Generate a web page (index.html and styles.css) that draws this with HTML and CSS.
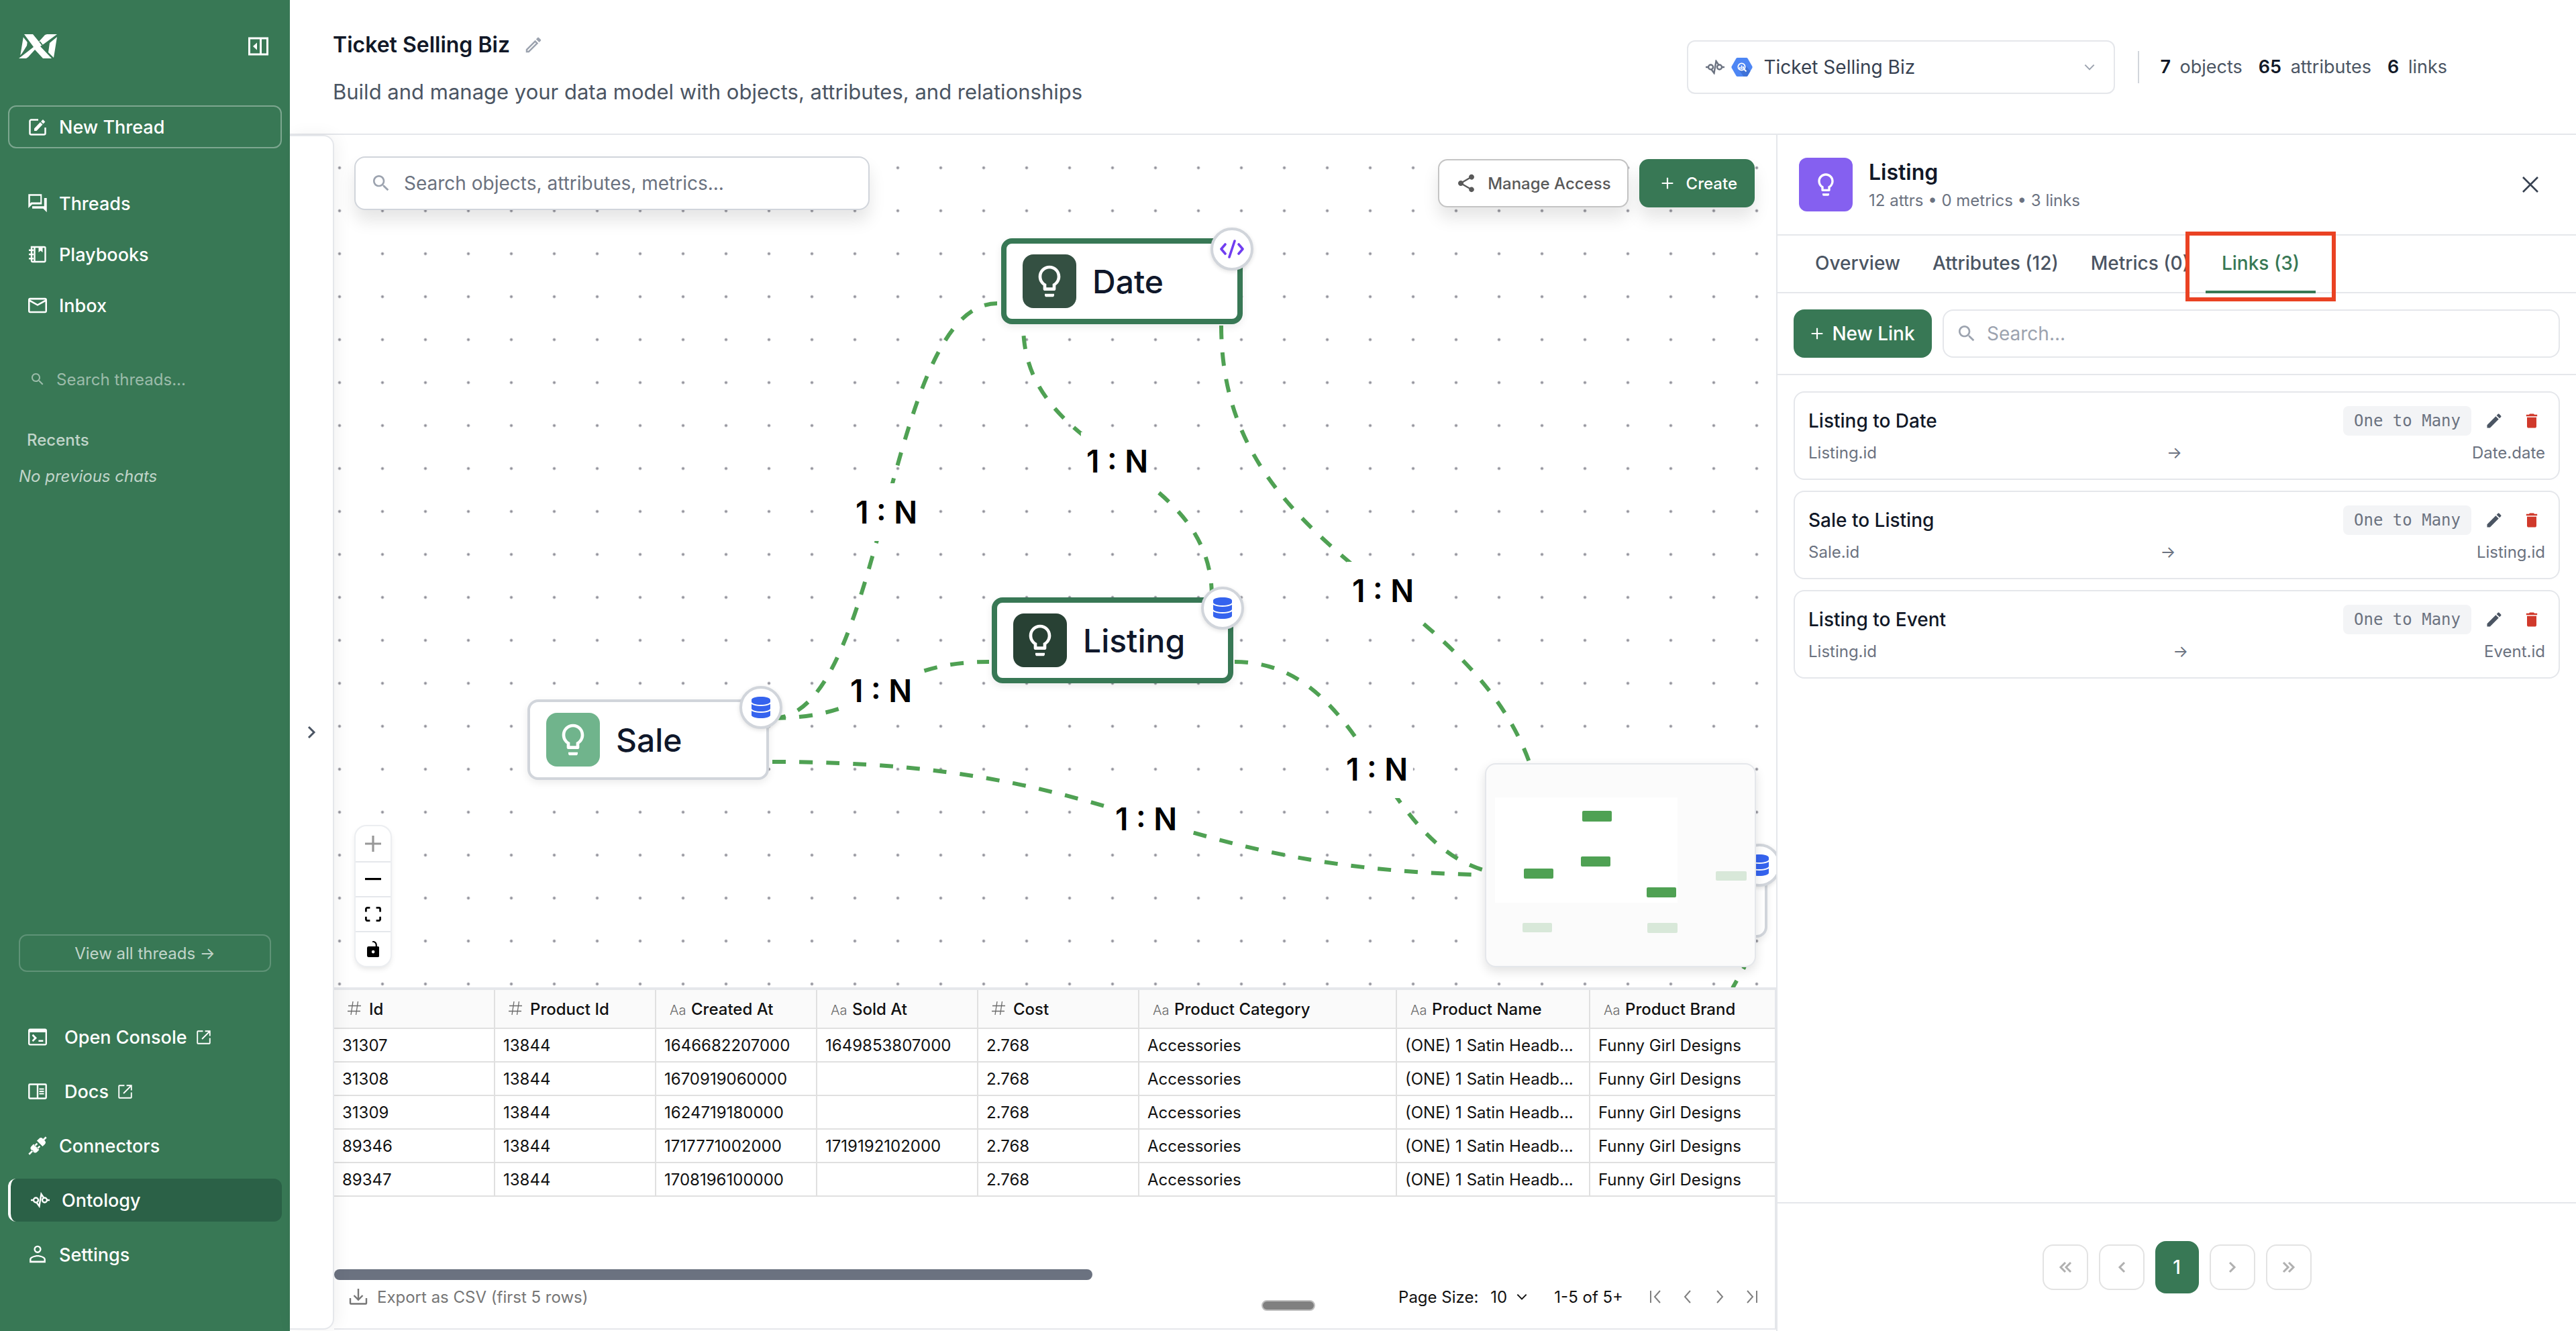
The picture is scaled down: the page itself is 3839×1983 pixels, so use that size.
FILE: index.html
```html
<!DOCTYPE html>
<html lang="en">
<head>
    <meta charset="UTF-8" />
    <meta name="viewport" content="width=device-width, initial-scale=1.0"/>
    <title>Ticket Selling Biz - Ontology</title>
    <link rel="stylesheet" href="styles.css">
</head>
<body>

<!-- shared icons -->
<svg class="icon-sprite" aria-hidden="true">
    <symbol id="i-search" viewBox="0 0 24 24"><path fill="currentColor" d="M15.5 14h-.79l-.28-.27C15.41 12.59 16 11.11 16 9.5 16 5.91 13.09 3 9.5 3S3 5.91 3 9.5 5.91 16 9.5 16c1.61 0 3.09-.59 4.23-1.57l.27.28v.79l5 4.99L20.49 19l-4.99-5zm-6 0C7.01 14 5 11.99 5 9.5S7.01 5 9.5 5 14 7.01 14 9.5 11.99 14 9.5 14z"/></symbol>
    <symbol id="i-edit" viewBox="0 0 24 24"><path fill="currentColor" d="M3 17.25V21h3.75L17.81 9.94l-3.75-3.75L3 17.25zM20.71 7.04c.39-.39.39-1.02 0-1.41l-2.34-2.34c-.39-.39-1.02-.39-1.41 0l-1.83 1.83 3.75 3.75 1.83-1.83z"/></symbol>
    <symbol id="i-trash" viewBox="0 0 24 24"><path fill="currentColor" d="M6 19c0 1.1.9 2 2 2h8c1.1 0 2-.9 2-2V7.600H6V19zM19 4h-3.500l-1-1h-5l-1 1H5v2.200h14V4z"/></symbol>
    <symbol id="i-bulb" viewBox="0 0 24 24"><path fill="currentColor" d="M9 21c0 .5.4 1 1 1h4c.6 0 1-.5 1-1v-1H9v1zm3-19C8.1 2 5 5.1 5 9c0 2.400 1.200 4.500 3 5.700V17c0 .5.4 1 1 1h6c.6 0 1-.5 1-1v-2.300c1.800-1.300 3-3.400 3-5.700 0-3.900-3.100-7-7-7zm2 11.700V16h-4v-2.300C8.200 12.900 7 11.100 7 9c0-2.800 2.200-5 5-5s5 2.200 5 5c0 2.100-1.200 3.900-3 4.700z"/></symbol>
    <symbol id="i-db" viewBox="0 0 448 512"><path fill="currentColor" d="M448 73.143v45.714C448 159.143 347.667 192 224 192S0 159.143 0 118.857V73.143C0 32.857 100.333 0 224 0s224 32.857 224 73.143zM448 176v102.857C448 319.143 347.667 352 224 352S0 319.143 0 278.857V176c48.125 33.143 136.208 48.572 224 48.572S399.874 209.143 448 176zm0 160v102.857C448 479.143 347.667 512 224 512S0 479.143 0 438.857V336c48.125 33.143 136.208 48.572 224 48.572S399.874 369.143 448 336z"/></symbol>
    <symbol id="i-external" viewBox="0 0 24 24"><path fill="currentColor" d="M20 20H4V4h7V2.200H4A1.800 1.800 0 0 0 2.200 4v16A1.800 1.800 0 0 0 4 21.800h16a1.800 1.800 0 0 0 1.800-1.800v-7H20v7zM14 2.200V4h4.700L9 13.700l1.300 1.300L20 5.300V10h1.800V2.200H14z"/></symbol>
    <symbol id="i-ontology" viewBox="0 0 28 22"><g fill="none" stroke="currentColor" stroke-width="2.4"><circle cx="7.5" cy="11" r="3.5"/><circle cx="20.5" cy="11" r="3.5"/><path d="M0 11h4M24 11h4M8.5 14.5l4 5.500 3-18 4 6"/></g></symbol>
    <symbol id="i-chevron-down" viewBox="0 0 24 24"><path fill="none" stroke="currentColor" stroke-width="2.4" d="M4 8l8 8 8-8"/></symbol>
    <symbol id="i-plus" viewBox="0 0 24 24"><path fill="none" stroke="currentColor" stroke-width="2.6" d="M12 2v20M2 12h20"/></symbol>
    <symbol id="i-hash" viewBox="0 0 20 20"><path fill="none" stroke="currentColor" stroke-width="1.3" d="M1 6.500h19M0 14.500h19M8 0L5 20M15.500 0l-3 20"/></symbol>
</svg>

<div class="app">
    <aside class="sidebar">
        <div class="sidebar-top">
            <svg class="logo" viewBox="0 0 58 36" role="img" aria-label="Logo">
                <g fill="#fff">
                    <path d="M8 0h13l9 11L39 1l3-1h15L38 14l-6 4 17 18H36L24 23 14 34l-3 2H0l13-10 9-7z"/>
                    <path d="M7 3l6 7-1 7L2 33zM57 4l-5 31-8-8 2-14z"/>
                </g>
                <path fill="none" stroke="#387855" stroke-width="2" d="M31 11l4 5M6 2l12 15L2 33"/>
            </svg>
            <button class="icon-button" aria-label="Collapse sidebar">
                <svg class="collapse-icon" viewBox="0 0 30 27">
                    <path fill="none" stroke="#fff" stroke-width="3" d="M1.500 1.500h27v24h-27zM18.500 1.500v24"/>
                    <path fill="#fff" d="M13 8v11l-6-5.500z"/>
                </svg>
            </button>
        </div>

        <a href="#" class="new-thread">
            <svg class="nav-icon" viewBox="0 0 28 28"><path fill="none" stroke="currentColor" stroke-width="2.5" d="M15 3.500H4.500a2 2 0 0 0-2 2v18a2 2 0 0 0 2 2h19a2 2 0 0 0 2-2V15"/><path fill="currentColor" d="M9 16.500V20h3.500l9-9.500L18 7zM19 6l3.500 3.500 2.800-3L22 3z"/></svg>
            New Thread
        </a>

        <nav class="nav-main">
            <a href="#" class="nav-item">
                <svg class="nav-icon" viewBox="2 2 20 20"><path fill="currentColor" d="M15 4v7H5.170L4 12.170V4h11m1.500-1.800H2.200V17l4-4h10.300zm5.300 4H19V15H6.300v2.500H18l3.800 4z"/></svg>
                Threads
            </a>
            <a href="#" class="nav-item">
                <svg class="nav-icon" viewBox="0 0 28 28"><path fill="none" stroke="currentColor" stroke-width="2.4" d="M5 3h19a1.500 1.500 0 0 1 1.500 1.500v19A1.500 1.500 0 0 1 24 25H6.500A1.500 1.500 0 0 1 5 23.500zM9.500 3v22"/><path fill="currentColor" d="M15.500 3h6v8l-3-2.500-3 2.500zM1 6.500h7v2.600H1zM1 12.700h7v2.600H1zM1 18.900h7v2.600H1z"/></svg>
                Playbooks
            </a>
            <a href="#" class="nav-item">
                <svg class="nav-icon" viewBox="2 2 20 20"><path fill="currentColor" d="M22 6c0-1.100-.9-2-2-2H4c-1.100 0-2 .9-2 2v12c0 1.100.9 2 2 2h16c1.100 0 2-.9 2-2V6zm-1.800 0L12 10.500 3.800 6zm0 12.200H3.800V8L12 12.500 20.200 8v10.200z"/></svg>
                Inbox
            </a>
        </nav>

        <label class="thread-search">
            <svg class="thread-search-icon"><use href="#i-search"/></svg>
            <input type="text" placeholder="Search threads..." aria-label="Search threads">
        </label>
        <h2 class="recents-title">Recents</h2>
        <p class="recents-empty">No previous chats</p>

        <div class="sidebar-bottom">
            <button class="view-all">View all threads →</button>
            <nav class="nav-bottom">
                <a href="#" class="nav-item nav-wide">
                    <svg class="nav-icon" viewBox="2 2 20 20"><path fill="currentColor" d="M20 3H4c-1.110 0-2 .9-2 2v14c0 1.100.89 2 2 2h16c1.100 0 2-.9 2-2V5c0-1.100-.9-2-2-2zm.3 16.300H3.700V7h16.600v12.300zM18 17h-5v-1.800h5V17zM7.300 17L6 15.700 8.400 13 6 10.400 7.300 9l4 4-4 4z"/></svg>
                    <span>Open Console</span>
                    <svg class="external-icon"><use href="#i-external"/></svg>
                </a>
                <a href="#" class="nav-item nav-wide">
                    <svg class="nav-icon" viewBox="0 0 28 28"><path fill="none" stroke="currentColor" stroke-width="2.4" d="M2.500 3.500h23a1.200 1.200 0 0 1 1.200 1.200v18.600a1.200 1.200 0 0 1-1.200 1.200h-23a1.200 1.200 0 0 1-1.200-1.200V4.700a1.200 1.200 0 0 1 1.200-1.200zM14 3.500v21"/><path stroke="currentColor" stroke-width="1.8" d="M16.500 10.500h7M16.500 14h7M16.500 17.500h7"/></svg>
                    <span>Docs</span>
                    <svg class="external-icon"><use href="#i-external"/></svg>
                </a>
                <a href="#" class="nav-item">
                    <svg class="nav-icon" viewBox="0 0 28 28"><g transform="rotate(45 14 14)" fill="currentColor"><path d="M8 9.500V5a4 4 0 0 1 4-4h4a4 4 0 0 1 4 4v4.500zM8 16.500V21a4 4 0 0 0 4 4h4a4 4 0 0 0 4-4v-4.500zM10 12h2.500v5H10zM15.500 12H18v5h-2.500zM12.700-4h2.600v6h-2.600zM12.700 24h2.600v8h-2.600z"/></g></svg>
                    Connectors
                </a>
                <a href="#" class="nav-item active">
                    <svg class="nav-icon"><use href="#i-ontology"/></svg>
                    Ontology
                </a>
                <a href="#" class="nav-item">
                    <svg class="nav-icon" viewBox="2 2 20 20"><path fill="currentColor" d="M12 4.200c1.300 0 2.300 1 2.300 2.300S13.300 8.800 12 8.800 9.700 7.800 9.700 6.500s1-2.300 2.300-2.300m0 10.200c3.300 0 6.800 1.600 6.800 2.800v1.600H5.200v-1.600c0-1.200 3.500-2.800 6.800-2.800M12 2.500a4 4 0 1 0 0 8 4 4 0 0 0 0-8zm0 10.200c-3 0-8.500 1.600-8.500 4.500v3.500h17v-3.500c0-2.900-5.500-4.500-8.500-4.500z"/></svg>
                    Settings
                </a>
            </nav>
        </div>
    </aside>

    <main class="main">
        <header class="page-header">
            <div class="page-heading">
                <div class="title-row">
                    <h1>Ticket Selling Biz</h1>
                    <button class="icon-button" aria-label="Rename">
                        <svg class="rename-icon" viewBox="0 0 24 24"><path fill="currentColor" d="M14.060 9.020l.92.92L5.920 19H5v-.92l9.060-9.060M17.660 3c-.25 0-.51.1-.7.29l-1.830 1.830 3.750 3.750 1.830-1.830c.39-.39.39-1.020 0-1.410l-2.340-2.340c-.2-.2-.45-.29-.71-.29zm-3.600 3.190L3 17.250V21h3.750L17.810 9.940l-3.750-3.750z"/></svg>
                    </button>
                </div>
                <p class="page-subtitle">Build and manage your data model with objects, attributes, and relationships</p>
            </div>
            <div class="header-right">
                <label class="model-select">
                    <svg class="model-icon"><use href="#i-ontology"/></svg>
                    <svg class="bigquery-icon" viewBox="0 0 32 28">
                        <path fill="#4d86f4" d="M9.500 0h13q1.500 0 2.200 1.200l6.600 11.500q.7 1.300 0 2.600l-6.600 11.500q-.7 1.200-2.200 1.200h-13q-1.500 0-2.200-1.200L.7 15.300q-.7-1.300 0-2.600L7.300 1.200Q8 0 9.500 0z"/>
                        <path fill="#3f72d8" d="M20 10l8.500 10-4 7q-.6 1-2 1h-4L12 19z"/>
                        <circle cx="15.5" cy="13.5" r="5.2" fill="#4d86f4" stroke="#fff" stroke-width="1.8"/>
                        <path stroke="#fff" stroke-width="1.8" d="M13 14v2.500M15.500 11.500V17M18 13v3.500M19.500 17.500l3 3"/>
                    </svg>
                    <select aria-label="Data model"><option>Ticket Selling Biz</option></select>
                    <svg class="select-arrow"><use href="#i-chevron-down"/></svg>
                </label>
                <div class="stats">
                    <span><b>7</b> objects</span>
                    <span><b>65</b> attributes</span>
                    <span><b>6</b> links</span>
                </div>
            </div>
        </header>

        <div class="workspace">
            <div class="drawer">
                <button class="icon-button" aria-label="Expand panel">
                    <svg class="drawer-icon" viewBox="0 0 24 24"><path fill="none" stroke="currentColor" stroke-width="3" d="M8 4l8 8-8 8"/></svg>
                </button>
            </div>

            <div class="center">
                <div class="canvas">
                    <svg class="edges">
                        <path d="M653 869C821 869 821 251 988 251"/>
                        <path d="M653 869C815 869 815 785 976 785"/>
                        <path d="M653 934C1210 934 1210 1103 1767 1103"/>
                        <path d="M1342 785C1554 785 1554 1103 1767 1103"/>
                        <path d="M1308 688C1308 486 1027 486 1027 284"/>
                        <path d="M1322 284C1322 678 1804 678 1804 1071"/>
                        <path class="edge-tail" d="M2102 1239L2084 1271"/>
                    </svg>

                    <span class="edge-label label-sale-date">1 : N</span>
                    <span class="edge-label label-sale-listing">1 : N</span>
                    <span class="edge-label label-sale-event">1 : N</span>
                    <span class="edge-label label-listing-event">1 : N</span>
                    <span class="edge-label label-listing-date">1 : N</span>
                    <span class="edge-label label-date-event">1 : N</span>

                    <div class="node selected node-date">
                        <span class="node-icon"><svg><use href="#i-bulb"/></svg></span>
                        Date
                        <span class="node-badge badge-code">
                            <svg viewBox="0 0 36 28"><path fill="none" stroke="currentColor" stroke-width="3.6" stroke-linecap="round" stroke-linejoin="round" d="M8 7l-6 7 6 7M28 7l6 7-6 7M22 2l-8 24"/></svg>
                        </span>
                    </div>
                    <div class="node selected node-listing">
                        <span class="node-icon"><svg><use href="#i-bulb"/></svg></span>
                        Listing
                        <span class="node-badge"><svg><use href="#i-db"/></svg></span>
                    </div>
                    <div class="node node-sale">
                        <span class="node-icon"><svg><use href="#i-bulb"/></svg></span>
                        Sale
                        <span class="node-badge"><svg><use href="#i-db"/></svg></span>
                    </div>
                    <div class="node node-event">
                        <span class="node-icon"><svg><use href="#i-bulb"/></svg></span>
                        <span class="node-badge"><svg><use href="#i-db"/></svg></span>
                    </div>

                    <div class="canvas-toolbar">
                        <label class="canvas-search">
                            <svg><use href="#i-search"/></svg>
                            <input type="text" placeholder="Search objects, attributes, metrics..." aria-label="Search objects, attributes, metrics">
                        </label>
                        <div class="canvas-actions">
                            <button class="btn-access">
                                <svg viewBox="0 0 24 24"><path fill="currentColor" d="M18 16.080c-.76 0-1.440.3-1.960.77L8.910 12.700c.05-.23.09-.46.09-.7s-.04-.47-.09-.7l7.050-4.110c.54.5 1.250.81 2.040.81 1.660 0 3-1.340 3-3s-1.340-3-3-3-3 1.340-3 3c0 .24.04.47.09.7L8.040 9.810C7.500 9.310 6.790 9 6 9c-1.660 0-3 1.340-3 3s1.340 3 3 3c.79 0 1.500-.31 2.040-.81l7.120 4.160c-.05.21-.08.43-.08.65 0 1.610 1.310 2.920 2.920 2.920 1.610 0 2.920-1.310 2.920-2.920s-1.310-2.920-2.920-2.920z"/></svg>
                                Manage Access
                            </button>
                            <button class="btn-create">
                                <svg><use href="#i-plus"/></svg>
                                Create
                            </button>
                        </div>
                    </div>

                    <div class="zoom-controls">
                        <button aria-label="Zoom in" disabled><svg viewBox="0 0 32 32"><path d="M32 18.133H18.133V32h-4.266V18.133H0v-4.266h13.867V0h4.266v13.867H32z"/></svg></button>
                        <button aria-label="Zoom out"><svg viewBox="0 0 32 5"><path d="M0 0h32v4.200H0z"/></svg></button>
                        <button aria-label="Fit view"><svg viewBox="0 0 32 30"><path d="M3.692 4.630c0-.53.4-.938.939-.938h5.215V0H4.708C2.130 0 0 2.054 0 4.630v5.216h3.692V4.631zM27.354 0h-5.200v3.692h5.170c.53 0 .984.4.984.939v5.215H32V4.631A4.624 4.624 0 0027.354 0zm.954 24.830c0 .532-.4.94-.939.94h-5.215v3.768h5.215c2.577 0 4.631-2.130 4.631-4.707v-5.139h-3.692v5.139zm-23.677.94c-.531 0-.939-.4-.939-.94v-5.138H0v5.139c0 2.577 2.130 4.707 4.708 4.707h5.138V25.770H4.631z"/></svg></button>
                        <button aria-label="Toggle lock"><svg viewBox="0 0 25 32"><path d="M21.333 10.667H19.810V7.619C19.810 3.429 16.380 0 12.190 0c-4.114 1.828-1.370 2.133.305 2.438 1.676.305 4.420 2.590 4.420 5.181v3.048H3.047A3.056 3.056 0 000 13.714v15.238A3.056 3.056 0 003.048 32h18.285a3.056 3.056 0 003.048-3.048V13.714a3.056 3.056 0 00-3.048-3.047zM12.190 24.533a3.056 3.056 0 01-3.047-3.047 3.056 3.056 0 013.047-3.048 3.056 3.056 0 013.048 3.048 3.056 3.056 0 01-3.048 3.047z"/></svg></button>
                    </div>

                    <svg class="minimap" viewBox="0 0 400 300" role="img" aria-label="Minimap">
                        <rect x="13" y="49" width="272" height="157" fill="#fff"/>
                        <g fill="#4fa153">
                            <rect x="143" y="69" width="44" height="16" rx="2"/>
                            <rect x="141" y="137" width="44" height="15" rx="2"/>
                            <rect x="56" y="155" width="44" height="15" rx="2"/>
                            <rect x="239" y="183" width="44" height="15" rx="2"/>
                        </g>
                        <g fill="#d8e8d9">
                            <rect x="342" y="159" width="46" height="14" rx="2"/>
                            <rect x="54" y="236" width="44" height="14" rx="2"/>
                            <rect x="240" y="236" width="45" height="15" rx="2"/>
                        </g>
                    </svg>
                </div>

                <section class="data-panel">
                    <table class="data-table">
                        <colgroup>
                            <col class="col-s"><col class="col-s"><col class="col-s"><col class="col-s"><col class="col-s">
                            <col class="col-l"><col class="col-m"><col>
                        </colgroup>
                        <thead>
                            <tr>
                                <th><svg class="hash"><use href="#i-hash"/></svg>Id</th>
                                <th><svg class="hash"><use href="#i-hash"/></svg>Product Id</th>
                                <th><i>Aa</i>Created At</th>
                                <th><i>Aa</i>Sold At</th>
                                <th><svg class="hash"><use href="#i-hash"/></svg>Cost</th>
                                <th><i>Aa</i>Product Category</th>
                                <th><i>Aa</i>Product Name</th>
                                <th><i>Aa</i>Product Brand</th>
                            </tr>
                        </thead>
                        <tbody>
                            <tr><td>31307</td><td>13844</td><td>1646682207000</td><td>1649853807000</td><td>2.768</td><td>Accessories</td><td>(ONE) 1 Satin Headb...</td><td>Funny Girl Designs</td></tr>
                            <tr><td>31308</td><td>13844</td><td>1670919060000</td><td></td><td>2.768</td><td>Accessories</td><td>(ONE) 1 Satin Headb...</td><td>Funny Girl Designs</td></tr>
                            <tr><td>31309</td><td>13844</td><td>1624719180000</td><td></td><td>2.768</td><td>Accessories</td><td>(ONE) 1 Satin Headb...</td><td>Funny Girl Designs</td></tr>
                            <tr><td>89346</td><td>13844</td><td>1717771002000</td><td>1719192102000</td><td>2.768</td><td>Accessories</td><td>(ONE) 1 Satin Headb...</td><td>Funny Girl Designs</td></tr>
                            <tr><td>89347</td><td>13844</td><td>1708196100000</td><td></td><td>2.768</td><td>Accessories</td><td>(ONE) 1 Satin Headb...</td><td>Funny Girl Designs</td></tr>
                        </tbody>
                    </table>
                    <div class="h-scroll"></div>
                    <div class="table-footer">
                        <button class="btn-export">
                            <svg viewBox="0 0 28 28"><path fill="none" stroke="currentColor" stroke-width="2.4" d="M14 2v16M7.500 12l6.500 6.500 6.500-6.500M2 16v7.500a1 1 0 0 0 1 1h22a1 1 0 0 0 1-1V16"/></svg>
                            Export as CSV (first 5 rows)
                        </button>
                        <div class="table-paging">
                            <label for="page-size">Page Size:</label>
                            <span class="page-size">
                                <select id="page-size"><option>10</option></select>
                                <svg><use href="#i-chevron-down"/></svg>
                            </span>
                            <span class="range">1-5 of 5+</span>
                            <button aria-label="First page"><svg viewBox="0 0 20 20"><path d="M3 1v18M17 1l-8 9 8 9"/></svg></button>
                            <button aria-label="Previous page"><svg viewBox="0 0 20 20"><path d="M14 1l-8 9 8 9"/></svg></button>
                            <button aria-label="Next page"><svg viewBox="0 0 20 20"><path d="M6 1l8 9-8 9"/></svg></button>
                            <button aria-label="Last page"><svg viewBox="0 0 20 20"><path d="M3 1l8 9-8 9M17 1v18"/></svg></button>
                        </div>
                    </div>
                    <span class="resize-handle"></span>
                </section>
            </div>

            <section class="details">
                <div class="details-header">
                    <span class="details-icon"><svg><use href="#i-bulb"/></svg></span>
                    <div class="details-heading">
                        <h2>Listing</h2>
                        <p>12 attrs • 0 metrics • 3 links</p>
                    </div>
                    <button class="icon-button" aria-label="Close">
                        <svg class="close-icon" viewBox="0 0 24 24"><path fill="none" stroke="currentColor" stroke-width="2.6" d="M1 1l22 22M23 1L1 23"/></svg>
                    </button>
                </div>
                <div class="tabs" role="tablist">
                    <button role="tab">Overview</button>
                    <button role="tab">Attributes (12)</button>
                    <button role="tab">Metrics (0)</button>
                    <button role="tab" class="active" aria-selected="true">Links (3)</button>
                </div>
                <div class="details-toolbar">
                    <button class="btn-new-link">
                        <svg><use href="#i-plus"/></svg>
                        New Link
                    </button>
                    <label class="link-search">
                        <svg><use href="#i-search"/></svg>
                        <input type="text" placeholder="Search..." aria-label="Search links">
                    </label>
                </div>
                <div class="link-list">
                    <article class="link-card">
                        <div class="link-row">
                            <h3>Listing to Date</h3>
                            <code>One to Many</code>
                            <button class="link-edit" aria-label="Edit"><svg><use href="#i-edit"/></svg></button>
                            <button class="link-delete" aria-label="Delete"><svg><use href="#i-trash"/></svg></button>
                        </div>
                        <div class="link-path"><span>Listing.id</span><span>→</span><span>Date.date</span></div>
                    </article>
                    <article class="link-card">
                        <div class="link-row">
                            <h3>Sale to Listing</h3>
                            <code>One to Many</code>
                            <button class="link-edit" aria-label="Edit"><svg><use href="#i-edit"/></svg></button>
                            <button class="link-delete" aria-label="Delete"><svg><use href="#i-trash"/></svg></button>
                        </div>
                        <div class="link-path"><span>Sale.id</span><span>→</span><span>Listing.id</span></div>
                    </article>
                    <article class="link-card">
                        <div class="link-row">
                            <h3>Listing to Event</h3>
                            <code>One to Many</code>
                            <button class="link-edit" aria-label="Edit"><svg><use href="#i-edit"/></svg></button>
                            <button class="link-delete" aria-label="Delete"><svg><use href="#i-trash"/></svg></button>
                        </div>
                        <div class="link-path"><span>Listing.id</span><span>→</span><span>Event.id</span></div>
                    </article>
                </div>
                <div class="pager">
                    <button aria-label="First page"><svg viewBox="0 0 20 20"><path d="M10 3l-7 7 7 7M18 3l-7 7 7 7"/></svg></button>
                    <button aria-label="Previous page"><svg viewBox="0 0 20 20"><path d="M14 3l-7 7 7 7"/></svg></button>
                    <button class="current">1</button>
                    <button aria-label="Next page"><svg viewBox="0 0 20 20"><path d="M6 3l7 7-7 7"/></svg></button>
                    <button aria-label="Last page"><svg viewBox="0 0 20 20"><path d="M2 3l7 7-7 7M10 3l7 7-7 7"/></svg></button>
                </div>
            </section>
        </div>
    </main>
</div>

</body>
</html>
```
FILE: styles.css
```css
* {
    box-sizing: border-box;
}

body {
    margin: 0;
    font-family: Inter, "Liberation Sans", sans-serif;
    font-size: 28px;
    color: #111827;
    background: #fff;
}

h1, h2, h3, p {
    margin: 0;
}

button, input, select {
    font: inherit;
    color: inherit;
    border: none;
    background: none;
    padding: 0;
    outline: none;
}

select {
    appearance: none;
}

svg {
    display: block;
    flex: none;
}

a {
    color: inherit;
    text-decoration: none;
}

.icon-sprite {
    position: absolute;
    width: 0;
    height: 0;
}

.icon-button {
    display: flex;
    align-items: center;
    justify-content: center;
}

.app {
    display: flex;
    height: 100vh;
    overflow: hidden;
}

/* sidebar */

.sidebar {
    display: flex;
    flex-direction: column;
    flex: none;
    width: 432px;
    padding: 46px 12px 82px;
    background: #387855;
    color: #fff;
    font-size: 27px;
    font-weight: 500;
}

.sidebar-top {
    display: flex;
    align-items: center;
    justify-content: space-between;
    padding: 0 20px 0 16px;
    height: 46px;
    margin-bottom: 65px;
}

.logo {
    width: 58px;
    height: 42px;
}

.collapse-icon {
    width: 30px;
    height: 30px;
}

.new-thread {
    display: flex;
    align-items: center;
    gap: 18px;
    height: 64px;
    padding: 0 28px;
    border: 2px solid rgba(255, 255, 255, 0.35);
    border-radius: 12px;
}

.nav-icon {
    width: 28px;
    height: 28px;
}

.nav-main {
    display: flex;
    flex-direction: column;
    gap: 12px;
    margin-top: 50px;
}

.nav-item {
    display: flex;
    align-items: center;
    gap: 18px;
    height: 64px;
    padding: 0 30px;
}

.nav-wide {
    gap: 12px;
}

.nav-wide span {
    padding-left: 14px;
}

.external-icon {
    width: 25px;
    height: 25px;
}

.nav-item.active {
    background: #2b6147;
    border-left: 4px solid #fff;
    border-radius: 12px;
}

.thread-search {
    display: flex;
    align-items: center;
    gap: 16px;
    height: 48px;
    margin-top: 54px;
    padding: 0 32px;
    color: rgba(255, 255, 255, 0.5);
}

.thread-search-icon {
    width: 24px;
    height: 24px;
}

.thread-search input {
    flex: 1;
    min-width: 0;
    font-size: 24px;
    font-weight: 400;
}

.thread-search input::placeholder {
    color: rgba(255, 255, 255, 0.5);
}

.recents-title {
    margin: 51px 0 0 28px;
    font-size: 24px;
    line-height: 32px;
    font-weight: 500;
    color: rgba(255, 255, 255, 0.7);
}

.recents-empty {
    margin: 22px 0 0 16px;
    font-size: 24px;
    line-height: 32px;
    font-weight: 400;
    font-style: italic;
    color: rgba(255, 255, 255, 0.7);
}

.sidebar-bottom {
    margin-top: auto;
}

.view-all {
    display: block;
    width: calc(100% - 32px);
    height: 56px;
    margin: 0 16px 65px;
    border: 2px solid rgba(255, 255, 255, 0.2);
    border-radius: 12px;
    font-size: 24px;
    font-weight: 400;
    color: rgba(255, 255, 255, 0.7);
}

.nav-bottom {
    display: flex;
    flex-direction: column;
    gap: 17px;
}

/* header */

.main {
    display: flex;
    flex-direction: column;
    flex: 1;
    min-width: 0;
}

.page-header {
    display: flex;
    align-items: center;
    justify-content: space-between;
    flex: none;
    height: 201px;
    padding: 0 192px 0 64px;
    border-bottom: 2px solid #e5e7eb;
}

.page-heading {
    display: flex;
    flex-direction: column;
    gap: 24px;
    padding-top: 2px;
}

.title-row {
    display: flex;
    align-items: center;
    gap: 20px;
}

.page-header h1 {
    font-size: 32px;
    line-height: 48px;
    font-weight: 600;
    color: #111827;
}

.rename-icon {
    width: 30px;
    height: 30px;
    color: #9ca3af;
}

.page-subtitle {
    font-size: 31px;
    line-height: 44px;
    color: #4b5563;
}

.header-right {
    display: flex;
    align-items: center;
    gap: 34px;
}

.model-select {
    display: flex;
    align-items: center;
    gap: 10px;
    width: 638px;
    height: 80px;
    padding: 0 26px;
    border: 2px solid #e5e7eb;
    border-radius: 12px;
    color: #374151;
}

.model-select select {
    flex: 1;
    padding-left: 6px;
}

.model-icon {
    width: 28px;
    height: 22px;
    color: #6b7280;
}

.bigquery-icon {
    width: 32px;
    height: 28px;
}

.select-arrow {
    width: 20px;
    height: 20px;
    color: #9ca3af;
}

.stats {
    display: flex;
    align-items: center;
    gap: 24px;
    height: 48px;
    padding-left: 31px;
    border-left: 2px solid #d1d5db;
    font-size: 27px;
    color: #4b5563;
}

.stats b {
    margin-right: 6px;
    font-weight: 600;
    color: #111827;
}

/* workspace */

.workspace {
    display: flex;
    flex: 1;
    min-height: 0;
    padding-bottom: 2px;
}

.drawer {
    display: flex;
    align-items: center;
    justify-content: center;
    flex: none;
    position: relative;
    z-index: 2;
    width: 66px;
    border: 2px solid #e5e7eb;
    border-left: none;
    border-radius: 0 16px 16px 0;
    background: #fff;
    box-shadow: 4px 0 24px rgba(0, 0, 0, 0.06);
}

.drawer-icon {
    width: 24px;
    height: 24px;
    color: #4b5563;
}

.center {
    display: flex;
    flex-direction: column;
    flex: 1;
    min-width: 0;
}

.canvas {
    position: relative;
    flex: 1;
    min-height: 0;
    overflow: hidden;
    background-image: radial-gradient(circle at center, #91919a 1px, transparent 3px);
    background-size: 64px 64px;
    background-position: -24px 17px;
}

.edges {
    position: absolute;
    inset: 0;
    width: 100%;
    height: 100%;
    fill: none;
    stroke: #4fa153;
    stroke-width: 6px;
    stroke-dasharray: 20 20;
}

.edge-tail {
    stroke-dashoffset: 16px;
}

.edge-label {
    position: absolute;
    transform: translate(-50%, -50%);
    padding: 16px 8px;
    background: #fff;
    font-size: 46px;
    line-height: 54px;
    font-weight: 600;
    white-space: nowrap;
    color: #000;
}

.label-sale-date { left: 823px; top: 562px; }
.label-sale-listing { left: 815px; top: 828px; }
.label-sale-event { left: 1210px; top: 1019px; }
.label-listing-event { left: 1554px; top: 945px; }
.label-listing-date { left: 1167px; top: 486px; }
.label-date-event { left: 1563px; top: 679px; }

.node {
    position: absolute;
    display: flex;
    align-items: center;
    gap: 24px;
    width: 360px;
    padding: 16px 24px;
    border: 4px solid #d1d5db;
    border-radius: 16px;
    background: #fff;
    box-shadow: 0 4px 12px rgba(0, 0, 0, 0.08);
    font-size: 48px;
    font-weight: 500;
    color: #0f172a;
}

.node.selected {
    border: 8px solid #387855;
}

.node-date { left: 994px; top: 154px; }
.node-listing { left: 980px; top: 689px; }
.node-sale { left: 288px; top: 841px; }
.node-event { left: 1776px; top: 1076px; }

.node-icon {
    display: flex;
    align-items: center;
    justify-content: center;
    width: 80px;
    height: 80px;
    border-radius: 16px;
    background: #70b48c;
    color: #fff;
}

.node-date .node-icon {
    background: #345042;
}

.node-listing .node-icon {
    background: #284134;
}

.node-icon svg {
    width: 56px;
    height: 56px;
}

.node-badge {
    position: absolute;
    top: -24px;
    right: -24px;
    display: flex;
    align-items: center;
    justify-content: center;
    width: 64px;
    height: 64px;
    border: 4px solid #d1d5db;
    border-radius: 50%;
    background: #fff;
    box-shadow: 0 2px 6px rgba(0, 0, 0, 0.12);
    color: #3563ee;
}

.node-badge svg {
    width: 28px;
    height: 32px;
}

.badge-code {
    color: #703df0;
}

.badge-code svg {
    width: 36px;
    height: 28px;
}

.canvas-toolbar {
    position: absolute;
    top: 32px;
    left: 30px;
    right: 32px;
    display: flex;
    align-items: flex-start;
    justify-content: space-between;
}

.canvas-search {
    display: flex;
    align-items: center;
    gap: 18px;
    width: 768px;
    height: 80px;
    padding: 0 22px;
    border: 2px solid #d1d5db;
    border-radius: 16px;
    background: #fff;
    box-shadow: 0 16px 24px rgba(0, 0, 0, 0.1);
    color: #9ca3af;
}

.canvas-search svg {
    width: 32px;
    height: 32px;
}

.canvas-search input {
    flex: 1;
    font-size: 28px;
}

.canvas-search input::placeholder {
    color: #6b7280;
}

.canvas-actions {
    display: flex;
    gap: 16px;
    padding-top: 4px;
}

.canvas-actions button {
    display: flex;
    align-items: center;
    gap: 18px;
    height: 72px;
    border-radius: 14px;
    box-shadow: 0 16px 24px rgba(0, 0, 0, 0.1);
    font-size: 24px;
    font-weight: 500;
}

.canvas-actions .btn-access {
    padding: 0 24px;
    gap: 16px;
    border: 2px solid #c4c4c4;
    background: #fff;
    color: #595959;
}

.btn-access svg {
    width: 32px;
    height: 32px;
}

.canvas-actions .btn-create {
    padding: 0 26px 0 32px;
    background: #387855;
    color: #fff;
}

.btn-create svg {
    width: 20px;
    height: 20px;
}

.zoom-controls {
    position: absolute;
    left: 32px;
    bottom: 32px;
    display: flex;
    flex-direction: column;
    width: 52px;
    border-radius: 16px;
    background: #fff;
    box-shadow: 0 0 0 2px #eceef1, 0 4px 8px rgba(0, 0, 0, 0.12);
}

.zoom-controls button {
    display: flex;
    align-items: center;
    justify-content: center;
    height: 52px;
}

.zoom-controls button + button {
    border-top: 2px solid #e5e7eb;
}

.zoom-controls button:disabled {
    opacity: 0.4;
}

.zoom-controls svg {
    max-width: 24px;
    max-height: 24px;
}

.minimap {
    position: absolute;
    right: 30px;
    bottom: 30px;
    width: 404px;
    height: 304px;
    border: 2px solid #e5e7eb;
    border-radius: 16px;
    background: #fbfbfb;
    box-shadow: 0 6px 16px rgba(0, 0, 0, 0.12);
}

/* table */

.data-panel {
    display: flex;
    flex-direction: column;
    flex: none;
    position: relative;
    border-top: 4px solid #e5e7eb;
    border-right: 2px solid #e5e7eb;
    border-bottom: 2px solid #e5e7eb;
}

.data-table {
    width: 100%;
    table-layout: fixed;
    border-collapse: separate;
    border-spacing: 0;
    font-size: 24px;
    color: #111;
}

.col-s { width: 240px; }
.col-m { width: 288px; }
.col-l { width: 384px; }

.data-table th,
.data-table td {
    border-right: 2px solid #e0e0e0;
    border-bottom: 2px solid #e0e0e0;
    text-align: left;
    white-space: nowrap;
    overflow: hidden;
}

.data-table th:last-child,
.data-table td:last-child {
    border-right: none;
}

.data-table th {
    height: 58px;
    padding: 0 20px;
    background: #fafafa;
    font-weight: 500;
}

.data-table td {
    height: 50px;
    padding: 0 12px;
}

.data-table i {
    display: inline-block;
    width: 32px;
    font-size: 20px;
    font-style: normal;
    font-weight: 300;
    color: #6b6b6b;
}

.hash {
    display: inline-block;
    width: 20px;
    height: 20px;
    margin-right: 12px;
    color: #6b6b6b;
}

.h-scroll {
    width: 1130px;
    height: 16px;
    margin-top: 108px;
    border-radius: 8px;
    background: #6b7280;
}

.table-footer {
    display: flex;
    align-items: center;
    justify-content: space-between;
    height: 50px;
    margin-bottom: 22px;
    padding: 0 24px 0 22px;
    font-size: 24px;
}

.btn-export {
    display: flex;
    align-items: center;
    gap: 14px;
    color: #767676;
}

.btn-export svg {
    width: 28px;
    height: 28px;
}

.table-paging {
    display: flex;
    align-items: center;
    color: #111;
}

.page-size {
    display: flex;
    align-items: center;
    gap: 12px;
    margin: 0 38px 0 18px;
}

.page-size svg {
    width: 20px;
    height: 20px;
}

.range {
    margin-right: 24px;
}

.table-paging button {
    display: flex;
    align-items: center;
    justify-content: center;
    width: 48px;
    height: 48px;
}

.table-paging button:last-child {
    margin-right: -14px;
}

.table-paging button svg,
.pager svg {
    width: 20px;
    height: 20px;
    fill: none;
    stroke: #808080;
    stroke-width: 2px;
}

.resize-handle {
    position: absolute;
    left: 1382px;
    bottom: 26px;
    width: 80px;
    height: 16px;
    border: 2px solid #bfbfbf;
    border-radius: 8px;
    background: #808080;
}

/* details panel */

.details {
    display: flex;
    flex-direction: column;
    flex: none;
    width: 1192px;
    margin-bottom: -2px;
    border-left: 2px solid #e5e7eb;
}

.details-header {
    display: flex;
    align-items: center;
    gap: 24px;
    height: 150px;
    padding: 0 56px 0 32px;
    border-bottom: 2px solid #e5e7eb;
}

.details-icon {
    display: flex;
    align-items: center;
    justify-content: center;
    width: 80px;
    height: 80px;
    border-radius: 12px;
    background: #8560f0;
    color: #fff;
}

.details-icon svg {
    width: 40px;
    height: 40px;
}

.details-heading {
    flex: 1;
    padding-top: 4px;
}

.details-heading h2 {
    font-size: 32px;
    line-height: 44px;
    font-weight: 600;
}

.details-heading p {
    font-size: 24px;
    line-height: 40px;
    color: #6b7280;
}

.close-icon {
    width: 24px;
    height: 24px;
    color: #374151;
}

.tabs {
    display: flex;
    height: 86px;
    padding-left: 32px;
    border-bottom: 2px solid #e5e7eb;
}

.tabs button {
    position: relative;
    height: 86px;
    padding: 0 24px;
    border-bottom: 4px solid transparent;
    font-weight: 500;
    color: #4b5563;
}

.tabs .active {
    border-bottom-color: #387855;
    color: #387855;
}

/* highlight box round the open tab */
.tabs .active::after {
    content: "";
    position: absolute;
    inset: -6px -30px -16px;
    border: 6px solid #ea4223;
}

.details-toolbar {
    display: flex;
    gap: 16px;
    padding: 24px;
    border-bottom: 2px solid #e5e7eb;
}

.btn-new-link {
    display: flex;
    align-items: center;
    justify-content: center;
    gap: 12px;
    width: 206px;
    height: 72px;
    border-radius: 16px;
    background: #387855;
    color: #fff;
    font-size: 28px;
    font-weight: 500;
}

.btn-new-link svg {
    width: 20px;
    height: 20px;
}

.link-search {
    display: flex;
    align-items: center;
    gap: 14px;
    flex: 1;
    height: 72px;
    padding: 0 18px;
    border: 2px solid #e5e7eb;
    border-radius: 16px;
    color: #9ca3af;
}

.link-search svg {
    width: 32px;
    height: 32px;
}

.link-search input {
    flex: 1;
}

.link-search input::placeholder {
    color: #9ca3af;
}

.link-list {
    display: flex;
    flex-direction: column;
    flex: 1;
    gap: 16px;
    padding: 24px;
}

.link-card {
    height: 132px;
    padding: 20px;
    border: 2px solid #e5e7eb;
    border-radius: 16px;
}

.link-row {
    display: flex;
    align-items: center;
    height: 44px;
}

.link-row h3 {
    flex: 1;
    font-size: 28px;
    font-weight: 500;
}

.link-row code {
    padding: 0 16px;
    border-radius: 8px;
    background: #f3f4f6;
    font-family: "DejaVu Sans Mono", monospace;
    font-size: 24px;
    line-height: 44px;
    color: #6b7280;
}

.link-row button {
    display: flex;
    align-items: center;
    justify-content: center;
    width: 40px;
    height: 40px;
}

.link-row svg {
    width: 28px;
    height: 28px;
}

.link-edit {
    margin: 0 16px 0 14px;
    color: #4b5563;
}

.link-delete {
    color: #d0392b;
}

.link-path {
    display: flex;
    justify-content: space-between;
    margin-top: 8px;
    font-size: 24px;
    line-height: 36px;
    color: #6b7280;
}

.pager {
    display: flex;
    align-items: center;
    justify-content: center;
    gap: 16px;
    height: 192px;
    border-top: 2px solid #e5e7eb;
}

.pager button {
    display: flex;
    align-items: center;
    justify-content: center;
    width: 68px;
    height: 68px;
    border: 2px solid #e3e3e3;
    border-radius: 16px;
}

.pager .current {
    width: 65px;
    height: 78px;
    border: none;
    background: #387855;
    color: #fff;
    font-weight: 500;
}

.pager svg {
    stroke: #b0b0b0;
    stroke-width: 3px;
}
```
